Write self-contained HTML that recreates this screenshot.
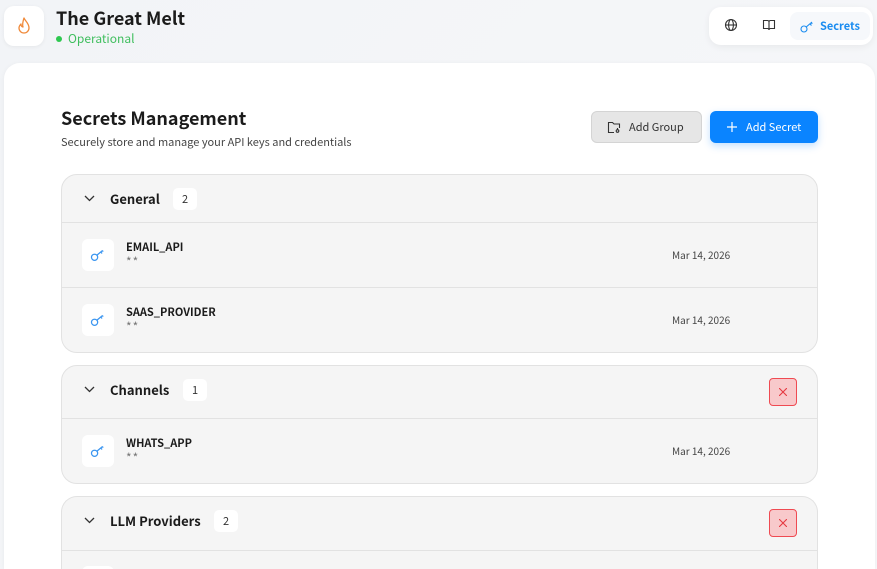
<!DOCTYPE html>
<html><head><style>
*{box-sizing:border-box;margin:0;padding:0}
html,body{width:877px;height:569px;overflow:hidden}
body{background:linear-gradient(135deg,#f2f4f7,#f7f8fa);font-family:"Noto Sans CJK SC","Liberation Sans",sans-serif;color:#1b1b1b;position:relative}
.logo{position:absolute;left:4px;top:6px;width:40px;height:40px;background:#fff;border-radius:10px;box-shadow:0 1px 4px rgba(0,0,0,.06);display:flex;align-items:center;justify-content:center}
.title{position:absolute;left:56px;top:6px;font-size:18px;font-weight:700;line-height:24px}
.status{position:absolute;left:56px;top:31px;font-size:12px;color:#3fbe5e;line-height:16px}
.status i{display:inline-block;width:6px;height:6px;border-radius:50%;background:#2ec850;margin-right:6px;vertical-align:1px}
.nav{position:absolute;left:709px;top:7px;width:164px;height:38px;background:#fff;border-radius:12px;box-shadow:0 2px 8px rgba(0,0,0,.06)}
.nav .ic{position:absolute;top:11px}
.nav .sec{position:absolute;left:81px;top:5px;width:80px;height:28px;background:#f6f8fb;border-radius:8px;color:#1a8cf0;font-size:11px;font-weight:700;line-height:28px;padding-left:30px}
.panel{position:absolute;left:4px;top:63px;width:871px;height:506px;background:#fff;border-radius:16px 16px 0 0;box-shadow:0 1px 6px rgba(0,0,0,.05)}
h1{position:absolute;left:61px;top:106px;font-size:18px;font-weight:700;line-height:24px}
.sub{position:absolute;left:61px;top:135px;font-size:11px;color:#444;line-height:14px}
.btn{position:absolute;top:111px;height:32px;border-radius:6px;font-size:11px;line-height:32px}
.b1{left:591px;width:111px;background:#e6e6e6;border:1px solid #d4d4d4;color:#333;padding-left:37px;line-height:30px}
.b2{left:710px;width:108px;background:#0a84ff;color:#fff;padding-left:36px;box-shadow:0 3px 8px rgba(10,132,255,.25)}
.grp{position:absolute;left:61px;width:757px;background:#f5f5f5;border:1px solid #e2e2e2;border-radius:16px;overflow:hidden}
.gh{height:48px;border-bottom:1px solid #e2e2e2;position:relative}
.gh .chev{position:absolute;left:22px;top:20px}
.gh b{position:absolute;left:48px;top:15px;font-size:13px;line-height:18px}
.cnt{position:absolute;top:13px;width:24px;height:22px;background:#fff;border-radius:5px;font-size:11px;text-align:center;line-height:22px;color:#333}
.del{position:absolute;left:707px;top:12px;width:28px;height:28px;background:#f8c9cb;border:1px solid #ef4a52;border-radius:4px}
.row{height:65px;border-bottom:1px solid #e2e2e2;position:relative}
.row:last-child{border-bottom:none}
.ki{position:absolute;left:20px;top:16px;width:32px;height:32px;background:#fff;border-radius:6px;display:flex;align-items:center;justify-content:center}
.nm{position:absolute;left:64px;top:17px;font-size:11px;font-weight:700;line-height:14px}
.st{position:absolute;left:64px;top:32px;font-size:12px;color:#777;line-height:14px;letter-spacing:1px}
.dt{position:absolute;left:610px;top:25px;font-size:10px;color:#444;line-height:14px}
</style></head><body>
<div class="logo"><svg width="16" height="18" viewBox="0 0 16 18"><path d="M8 1c1 3 5 5 5 10a5 5 0 0 1-10 0c0-2 1-3 2-4 0 2 1 3 2 3-1-3 0-6 1-9z" fill="none" stroke="#f08a3a" stroke-width="1.3" stroke-linejoin="round"/></svg></div>
<div class="title">The Great Melt</div>
<div class="status"><i></i>Operational</div>
<div class="nav">
<svg class="ic" style="left:15px" width="14" height="14" viewBox="0 0 14 14" fill="none" stroke="#333" stroke-width="1.1"><circle cx="7" cy="7" r="5.5"/><ellipse cx="7" cy="7" rx="2.4" ry="5.5"/><path d="M1.5 7h11"/></svg>
<svg class="ic" style="left:53px" width="14" height="14" viewBox="0 0 14 14" fill="none" stroke="#333" stroke-width="1.1"><path d="M1.5 2.5h4a1.5 1.5 0 0 1 1.5 1.5v8a1.5 1.5 0 0 0-1.5-1.5h-4zM12.5 2.5h-4A1.5 1.5 0 0 0 7 4v8a1.5 1.5 0 0 1 1.5-1.5h4z"/></svg>
<div class="sec"><svg style="position:absolute;left:10px;top:8px" width="14" height="13" viewBox="0 0 14 13" fill="none" stroke="#1a8cf0" stroke-width="1.1"><circle cx="4" cy="9" r="3"/><path d="M6.2 7 12 2M10 4l1.5 1.5M11.3 2.8l1 1"/></svg>Secrets</div>
</div>
<div class="panel"></div>
<h1>Secrets Management</h1>
<div class="sub">Securely store and manage your API keys and credentials</div>
<div class="btn b1"><svg style="position:absolute;left:15px;top:9px" width="14" height="13" viewBox="0 0 14 13" fill="none" stroke="#333" stroke-width="1.1"><path d="M7 11.5H1.5v-10h4l1.5 1.5h5.5v4"/><circle cx="10.5" cy="10" r="1.3"/><path d="M10.5 8.7V7"/></svg>Add Group</div>
<div class="btn b2"><svg style="position:absolute;left:17px;top:11px" width="10" height="10" viewBox="0 0 10 10" stroke="#fff" stroke-width="1.2"><path d="M5 0v10M0 5h10"/></svg>Add Secret</div>

<div class="grp" style="top:174px;height:179px">
<div class="gh"><svg class="chev" width="11" height="7" viewBox="0 0 11 7" fill="none" stroke="#333" stroke-width="1.3"><path d="M1 1l4.5 4.5L10 1"/></svg><b>General</b><span class="cnt" style="left:111px">2</span></div>
<div class="row"><div class="ki"><svg width="16" height="14" viewBox="0 0 14 12" fill="none" stroke="#3a95f0" stroke-width="1.1"><circle cx="4" cy="8" r="2.7"/><path d="M6 6.2 11 2M9.4 3.4l1.2 1.2M10.8 2.2l.8.8"/></svg></div><div class="nm">EMAIL_API</div><div class="st">**</div><div class="dt">Mar 14, 2026</div></div>
<div class="row"><div class="ki"><svg width="16" height="14" viewBox="0 0 14 12" fill="none" stroke="#3a95f0" stroke-width="1.1"><circle cx="4" cy="8" r="2.7"/><path d="M6 6.2 11 2M9.4 3.4l1.2 1.2M10.8 2.2l.8.8"/></svg></div><div class="nm">SAAS_PROVIDER</div><div class="st">**</div><div class="dt">Mar 14, 2026</div></div>
</div>

<div class="grp" style="top:365px;height:119px">
<div class="gh" style="height:53px"><svg class="chev" width="11" height="7" viewBox="0 0 11 7" fill="none" stroke="#333" stroke-width="1.3"><path d="M1 1l4.5 4.5L10 1"/></svg><b>Channels</b><span class="cnt" style="left:121px">1</span><div class="del"><svg style="position:absolute;left:9px;top:9px" width="8" height="8" viewBox="0 0 8 8" stroke="#e53940" stroke-width="1.1"><path d="M0 0l8 8M8 0 0 8"/></svg></div></div>
<div class="row"><div class="ki"><svg width="16" height="14" viewBox="0 0 14 12" fill="none" stroke="#3a95f0" stroke-width="1.1"><circle cx="4" cy="8" r="2.7"/><path d="M6 6.2 11 2M9.4 3.4l1.2 1.2M10.8 2.2l.8.8"/></svg></div><div class="nm">WHATS_APP</div><div class="st">**</div><div class="dt">Mar 14, 2026</div></div>
</div>

<div class="grp" style="top:496px;height:73px;border-bottom:none;border-radius:16px 16px 0 0">
<div class="gh" style="height:54px"><svg class="chev" width="11" height="7" viewBox="0 0 11 7" fill="none" stroke="#333" stroke-width="1.3"><path d="M1 1l4.5 4.5L10 1"/></svg><b>LLM Providers</b><span class="cnt" style="left:152px">2</span><div class="del"><svg style="position:absolute;left:9px;top:9px" width="8" height="8" viewBox="0 0 8 8" stroke="#e53940" stroke-width="1.1"><path d="M0 0l8 8M8 0 0 8"/></svg></div></div>
<div style="position:absolute;left:20px;top:69px;width:32px;height:10px;background:#fff;border-radius:6px 6px 0 0"></div>
</div>
</body></html>
